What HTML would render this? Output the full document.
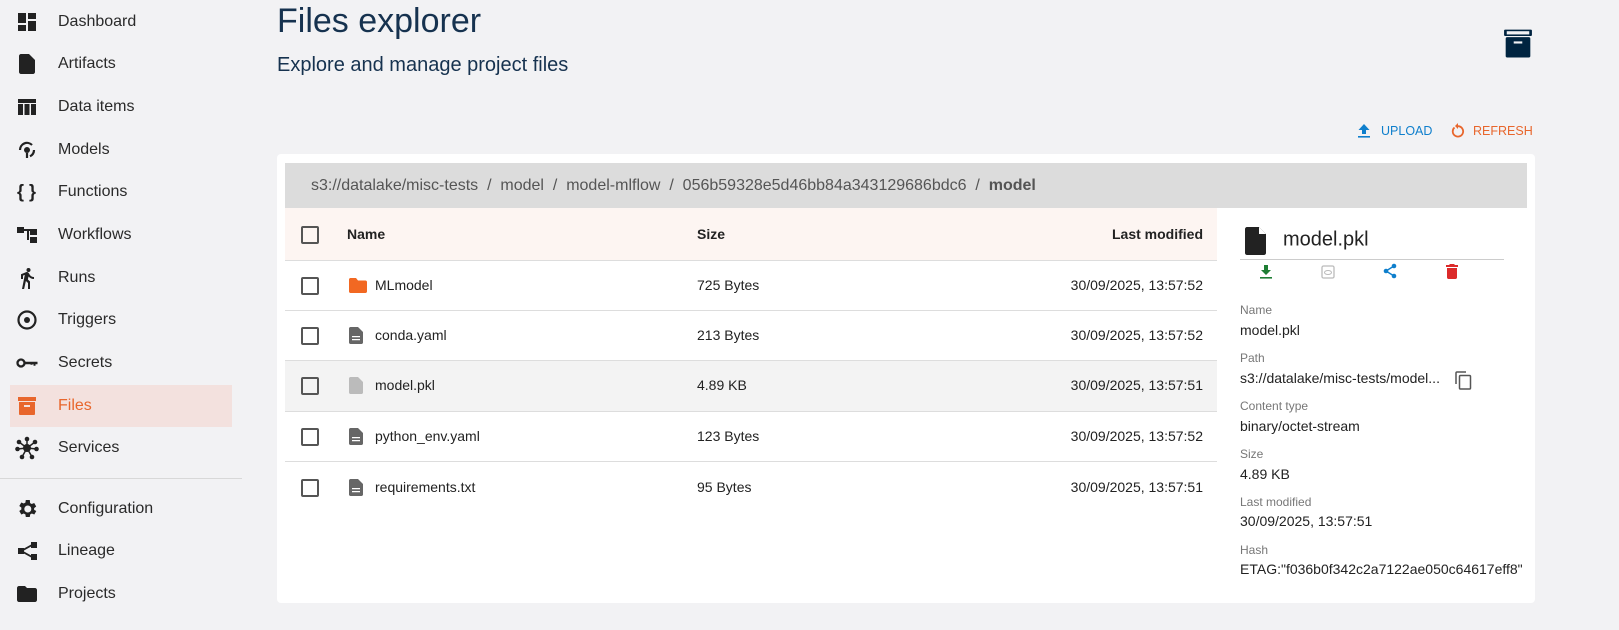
<!DOCTYPE html>
<html><head><meta charset="utf-8"><style>
*{margin:0;padding:0;box-sizing:border-box}
body{width:1619px;height:630px;background:#f2f2f4;font-family:"Liberation Sans",sans-serif;color:#222;position:relative;overflow:hidden}
.a{position:absolute;white-space:nowrap}
.nav{left:58px;font-size:16px;color:#2a2a2a;transform:translateY(-50%)}
.ic{position:absolute;left:15px;width:24px;height:24px;transform:translateY(-50%)}
.cb{position:absolute;left:301px;width:18px;height:18px;border:2px solid #555;border-radius:2px;transform:translateY(-50%)}
.t{font-size:14px;transform:translateY(-50%)}
.r{right:416px;text-align:right}
.hl{position:absolute;height:1px;background:#ddd;left:285px;width:932px}
.lab{left:1240px;font-size:12px;color:#777}
.val{left:1240px;font-size:14px;color:#222}
</style></head><body>
<div class="a" style="left:10px;top:385px;width:222px;height:42px;background:#f3e1de"></div>
<svg class="ic" style="top:22px" viewBox="0 0 24 24"><path d="M3 13h8V3H3zm0 8h8v-6H3zm10 0h8V11h-8zm0-18v6h8V3z" fill="#222"/></svg>
<div class="a nav" style="top:22px">Dashboard</div>
<svg class="ic" style="top:64px" viewBox="0 0 24 24"><path d="M6 2c-1.1 0-2 .9-2 2v16c0 1.1.9 2 2 2h12c1.1 0 2-.9 2-2V8l-6-6z" fill="#222"/></svg>
<div class="a nav" style="top:64px">Artifacts</div>
<svg class="ic" style="top:107px" viewBox="0 0 24 24"><path d="M3 4h18v4H3zm0 5h5v11H3zm6.5 0h5v11h-5zm6.5 0h5v11h-5z" fill="#222"/></svg>
<div class="a nav" style="top:107px">Data items</div>
<svg class="ic" style="top:150px" viewBox="0 0 24 24"><circle cx="12" cy="12" r="3" fill="#222"/><path d="M12 15v5M5 12a7 7 0 0 1 12-5M19 12a7 7 0 0 1-4 6.3" stroke="#222" stroke-width="2.2" fill="none"/></svg>
<div class="a nav" style="top:150px">Models</div>
<div class="a" style="left:17px;top:192px;transform:translateY(-50%);font-size:18px;font-weight:bold">{ }</div>
<div class="a nav" style="top:192px">Functions</div>
<svg class="ic" style="top:235px" viewBox="0 0 24 24"><path d="M2 4h7v6H2zm13 2h7v6h-7zm0 8h7v6h-7zM9 6h6v2H9zm3 1h2v10h-2z" fill="#222"/></svg>
<div class="a nav" style="top:235px">Workflows</div>
<svg class="ic" style="top:278px" viewBox="0 0 24 24"><circle cx="13.5" cy="4" r="2" fill="#222"/><path d="M9.8 8.9L7 23h2.1l1.8-8 2.1 2v6h2v-7.5l-2.1-2 .6-3C14.8 12 16.8 13 19 13v-2c-1.9 0-3.5-1-4.300-2.4l-1-1.6c-.4-.6-1-1-1.7-1-.3 0-.5.1-.8.1L6 8.300V13h2V9.600z" fill="#222"/></svg>
<div class="a nav" style="top:278px">Runs</div>
<svg class="ic" style="top:320px" viewBox="0 0 24 24"><circle cx="12" cy="12" r="8.5" stroke="#222" stroke-width="2.2" fill="none"/><circle cx="12" cy="12" r="3" fill="#222"/></svg>
<div class="a nav" style="top:320px">Triggers</div>
<svg class="ic" style="top:363px" viewBox="0 0 24 24"><circle cx="6" cy="12" r="3.5" stroke="#222" stroke-width="2.3" fill="none"/><path d="M9.5 10.8h13v2.4h-13zm9 1h2v3h-2zm-3 0h2v2h-2z" fill="#222"/></svg>
<div class="a nav" style="top:363px">Secrets</div>
<svg class="ic" style="top:406px" viewBox="0 0 24 24"><path d="M3 3h18v4H3zm1 5h16v12c0 .6-.5 1-1 1H5c-.5 0-1-.4-1-1z" fill="#e8662c"/><rect x="9" y="11" width="6" height="2" fill="#f3e1de"/></svg>
<div class="a nav" style="top:406px;color:#e8662c">Files</div>
<svg class="ic" style="top:448px" viewBox="0 0 24 24"><g fill="#222"><circle cx="12" cy="12" r="4"/><circle cx="4" cy="6" r="2.3"/><circle cx="20" cy="6" r="2.3"/><circle cx="2.5" cy="13" r="2.3"/><circle cx="21.5" cy="13" r="2.3"/><circle cx="7" cy="21" r="2.3"/><circle cx="17" cy="21" r="2.3"/><circle cx="12" cy="3" r="2.3"/></g><path d="M12 12L4 6M12 12L20 6M12 12L2.5 13M12 12L21.5 13M12 12L7 21M12 12L17 21M12 12V3" stroke="#222" stroke-width="1.5"/></svg>
<div class="a nav" style="top:448px">Services</div>
<div class="a" style="left:0;top:478px;width:242px;height:1px;background:#d8d8d8"></div>
<svg class="ic" style="top:509px" viewBox="0 0 24 24"><path d="M19.1 12.9a7 7 0 0 0 0-1.8l2.1-1.6-2-3.5-2.5 1a7 7 0 0 0-1.6-.9L14.8 3h-4l-.4 2.6c-.6.2-1.1.5-1.6.9l-2.5-1-2 3.5 2.1 1.6a7 7 0 0 0 0 1.8l-2.1 1.6 2 3.5 2.5-1c.5.4 1 .7 1.6.9l.4 2.6h4l.4-2.6c.6-.2 1.1-.5 1.6-.9l2.5 1 2-3.5zM12.8 15.5a3.5 3.5 0 1 1 0-7 3.5 3.5 0 0 1 0 7z" fill="#222"/></svg>
<div class="a nav" style="top:509px">Configuration</div>
<svg class="ic" style="top:551px" viewBox="0 0 24 24"><path d="M16 3h6v6h-6zm0 12h6v6h-6zM3 9h6v6H3zm5 1l9-5 1 1.5-9 5zm0 4l1-1.5 9 5-1 1.5z" fill="#222"/></svg>
<div class="a nav" style="top:551px">Lineage</div>
<svg class="ic" style="top:594px" viewBox="0 0 24 24"><path d="M10 4H4c-1.1 0-2 .9-2 2v12c0 1.1.9 2 2 2h16c1.1 0 2-.9 2-2V8c0-1.1-.9-2-2-2h-8z" fill="#222"/></svg>
<div class="a nav" style="top:594px">Projects</div>

<div class="a" style="left:277px;top:2px;font-size:34px;color:#16324f">Files explorer</div>
<div class="a" style="left:277px;top:54px;font-size:20px;color:#16324f">Explore and manage project files</div>
<svg class="a" style="left:1503px;top:27px;width:30px;height:32px" viewBox="0 0 28 29"><rect x="1" y="2" width="26" height="6" rx="1" fill="#002440"/><rect x="2.5" y="9" width="23" height="19" rx="1.5" fill="#002440"/><rect x="3.5" y="3.5" width="21" height="3" fill="#f2f2f4"/><rect x="10" y="13" width="8" height="2" fill="#f2f2f4"/></svg>
<svg class="a" style="left:1357px;top:123px;width:14px;height:15px" viewBox="0 0 14 15"><path d="M7 1L1.5 7H5v4h4V7h3.5z" fill="#0f7fcc"/><rect x="1" y="13" width="12" height="1.6" fill="#0f7fcc"/></svg>
<div class="a" style="left:1381px;top:124px;font-size:12.5px;color:#0f7fcc">UPLOAD</div>
<svg class="a" style="left:1450px;top:122px;width:16px;height:17px" viewBox="0 0 16 17"><path d="M4.5 5.5A5.2 5.2 0 1 0 8 4.2" stroke="#e8662c" stroke-width="1.8" fill="none"/><path d="M8 1v6L5 4z" fill="#e8662c"/></svg>
<div class="a" style="left:1473px;top:124px;font-size:12.5px;color:#e8662c">REFRESH</div>

<div class="a" style="left:277px;top:154px;width:1258px;height:449px;background:#fff;border-radius:4px"></div>
<div class="a" style="left:285px;top:163px;width:1242px;height:45px;background:#dcdcdc"></div>
<div class="a" style="left:311px;top:186px;transform:translateY(-50%);font-size:16px;color:#555">s3://datalake/misc-tests &nbsp;/&nbsp; model &nbsp;/&nbsp; model-mlflow &nbsp;/&nbsp; 056b59328e5d46bb84a343129686bdc6 &nbsp;/&nbsp; <b>model</b></div>
<div class="a" style="left:285px;top:208px;width:932px;height:52px;background:#fdf5f2"></div>
<div class="a" style="left:285px;top:361px;width:932px;height:50px;background:#f3f3f3"></div>
<div class="hl" style="top:260px"></div><div class="hl" style="top:310px"></div><div class="hl" style="top:360px"></div><div class="hl" style="top:411px"></div><div class="hl" style="top:461px"></div>
<div class="cb" style="top:235px"></div><div class="a t" style="left:347px;top:234px;font-weight:bold">Name</div><div class="a t" style="left:697px;top:234px;font-weight:bold">Size</div><div class="a t r" style="top:234px;font-weight:bold">Last modified</div>

<div class="cb" style="top:286px"></div>
<svg class="a" style="left:349px;top:278px;width:18px;height:15px" viewBox="0 0 18 15"><path d="M7 0H1.5C.7 0 0 .7 0 1.5v12c0 .8.7 1.5 1.5 1.5h15c.8 0 1.5-.7 1.5-1.5V4c0-.8-.7-1.5-1.5-1.5H9z" fill="#f26822"/></svg>
<div class="a t" style="left:375px;top:285px">MLmodel</div><div class="a t" style="left:697px;top:285px">725 Bytes</div><div class="a t r" style="top:285px">30/09/2025, 13:57:52</div>

<div class="cb" style="top:336px"></div>
<svg class="a" style="left:349px;top:327px;width:14px;height:17px" viewBox="0 0 14 17"><path d="M1.5 0C.7 0 0 .7 0 1.5v14c0 .8.7 1.5 1.5 1.5h11c.8 0 1.5-.7 1.5-1.5V5L9 0z" fill="#666"/><path d="M3 9h8v1.3H3zm0 3h8v1.3H3z" fill="#fff"/></svg>
<div class="a t" style="left:375px;top:335px">conda.yaml</div><div class="a t" style="left:697px;top:335px">213 Bytes</div><div class="a t r" style="top:335px">30/09/2025, 13:57:52</div>

<div class="cb" style="top:386px"></div>
<svg class="a" style="left:349px;top:377px;width:14px;height:17px" viewBox="0 0 14 17"><path d="M1.5 0C.7 0 0 .7 0 1.5v14c0 .8.7 1.5 1.5 1.5h11c.8 0 1.5-.7 1.5-1.5V5L9 0z" fill="#bbb"/></svg>
<div class="a t" style="left:375px;top:385px">model.pkl</div><div class="a t" style="left:697px;top:385px">4.89 KB</div><div class="a t r" style="top:385px">30/09/2025, 13:57:51</div>

<div class="cb" style="top:437px"></div>
<svg class="a" style="left:349px;top:428px;width:14px;height:17px" viewBox="0 0 14 17"><path d="M1.5 0C.7 0 0 .7 0 1.5v14c0 .8.7 1.5 1.5 1.5h11c.8 0 1.5-.7 1.5-1.5V5L9 0z" fill="#666"/><path d="M3 9h8v1.3H3zm0 3h8v1.3H3z" fill="#fff"/></svg>
<div class="a t" style="left:375px;top:436px">python_env.yaml</div><div class="a t" style="left:697px;top:436px">123 Bytes</div><div class="a t r" style="top:436px">30/09/2025, 13:57:52</div>

<div class="cb" style="top:488px"></div>
<svg class="a" style="left:349px;top:479px;width:14px;height:17px" viewBox="0 0 14 17"><path d="M1.5 0C.7 0 0 .7 0 1.5v14c0 .8.7 1.5 1.5 1.5h11c.8 0 1.5-.7 1.5-1.5V5L9 0z" fill="#666"/><path d="M3 9h8v1.3H3zm0 3h8v1.3H3z" fill="#fff"/></svg>
<div class="a t" style="left:375px;top:487px">requirements.txt</div><div class="a t" style="left:697px;top:487px">95 Bytes</div><div class="a t r" style="top:487px">30/09/2025, 13:57:51</div>

<svg class="a" style="left:1245px;top:227px;width:21px;height:28px" viewBox="0 0 21 28"><path d="M2 0C.9 0 0 .9 0 2v24c0 1.1.9 2 2 2h17c1.1 0 2-.9 2-2V7l-7-7z" fill="#222"/><path d="M14 0l7 7h-7z" fill="#fff"/></svg>
<div class="a" style="left:1283px;top:240px;transform:translateY(-50%);font-size:20px">model.pkl</div>
<div class="a" style="left:1240px;top:259px;width:264px;height:1px;background:#ccc"></div>
<svg class="a" style="left:1259px;top:264px;width:14px;height:15px" viewBox="0 0 14 15"><path d="M5 1h4v5h3L7 11 2 6h3z" fill="#1e7e34"/><rect x="1" y="13" width="12" height="1.6" fill="#1e7e34"/></svg>
<svg class="a" style="left:1321px;top:265px;width:14px;height:14px" viewBox="0 0 14 14"><rect x="1" y="1" width="12" height="12" rx="1.5" stroke="#bbb" stroke-width="1.3" fill="none"/><ellipse cx="7" cy="7.5" rx="3.5" ry="2" stroke="#bbb" fill="none"/></svg>
<svg class="a" style="left:1383px;top:263px;width:14px;height:16px" viewBox="0 0 14 16"><circle cx="11" cy="3" r="2.3" fill="#0f7fcc"/><circle cx="3" cy="8" r="2.3" fill="#0f7fcc"/><circle cx="11" cy="13" r="2.3" fill="#0f7fcc"/><path d="M11 3L3 8l8 5" stroke="#0f7fcc" stroke-width="1.4" fill="none"/></svg>
<svg class="a" style="left:1446px;top:264px;width:12px;height:15px" viewBox="0 0 12 15"><path d="M4 0h4l1 1h3v2H0V1h3zM1 4h10v9.5c0 .8-.7 1.5-1.5 1.5h-7C1.7 15 1 14.3 1 13.5z" fill="#dc2a2a"/></svg>
<div class="a lab" style="top:303px">Name</div><div class="a val" style="top:322px">model.pkl</div>
<div class="a lab" style="top:351px">Path</div><div class="a val" style="top:370px">s3://datalake/misc-tests/model...</div>
<svg class="a" style="left:1455px;top:371px;width:17px;height:19px" viewBox="0 0 17 19"><path d="M1 13V2c0-.6.4-1 1-1h9" stroke="#555" stroke-width="1.5" fill="none"/><rect x="4.5" y="4.5" width="11" height="13.5" rx="1" stroke="#555" stroke-width="1.5" fill="none"/></svg>
<div class="a lab" style="top:399px">Content type</div><div class="a val" style="top:418px">binary/octet-stream</div>
<div class="a lab" style="top:447px">Size</div><div class="a val" style="top:466px">4.89 KB</div>
<div class="a lab" style="top:495px">Last modified</div><div class="a val" style="top:513px">30/09/2025, 13:57:51</div>
<div class="a lab" style="top:543px">Hash</div><div class="a val" style="top:561px">ETAG:"f036b0f342c2a7122ae050c64617eff8"</div>
</body></html>
